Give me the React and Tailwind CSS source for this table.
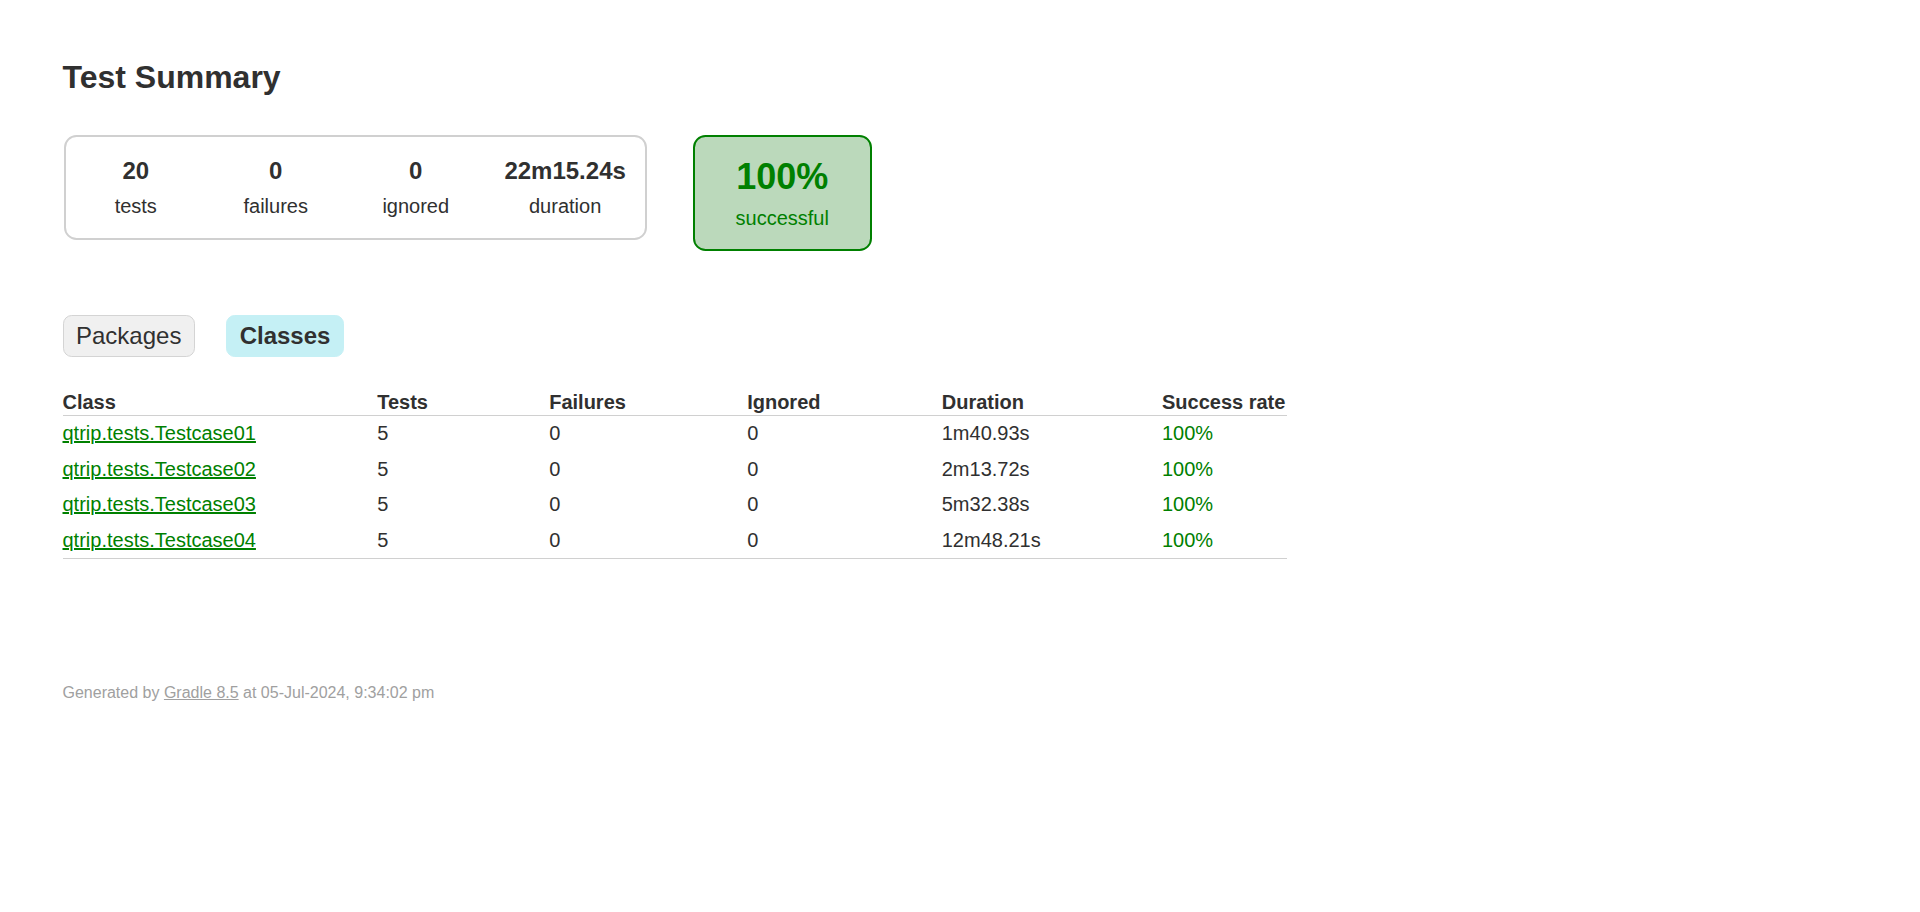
export default function App() {
  const rows = [
    ["qtrip.tests.Testcase01", "5", "0", "0", "1m40.93s", "100%"],
    ["qtrip.tests.Testcase02", "5", "0", "0", "2m13.72s", "100%"],
    ["qtrip.tests.Testcase03", "5", "0", "0", "5m32.38s", "100%"],
    ["qtrip.tests.Testcase04", "5", "0", "0", "12m48.21s", "100%"],
  ];
  const boxes = [
    ["20", "tests", "w-[137.5px]"],
    ["0", "failures", "w-[137.5px]"],
    ["0", "ignored", "w-[137.5px]"],
    ["22m15.24s", "duration", "w-[156.25px]"],
  ];
  return (
    <div className="min-h-screen bg-white text-[#303030] text-[20px] leading-[1.15] font-['Liberation_Sans',Arial,sans-serif]">
      <div className="px-[62.5px] py-[37.5px]">
        <h1 className="text-[32px] font-bold mt-[21.5px] whitespace-nowrap">Test Summary</h1>

        <div className="mt-[37.5px] flex items-start">
          <div className="p-[1.25px]">
            <div className="flex border-2 border-[#d0d0d0] rounded-[12.5px]">
              {boxes.map(([v, l, w]) => (
                <div key={l} className="p-[1.25px]">
                  <div className={`${w} pt-[19px] pb-[18.5px] text-center`}>
                    <div className="text-[24px] font-bold mb-[10.5px]">{v}</div>
                    <p>{l}</p>
                  </div>
                </div>
              ))}
            </div>
          </div>
          <div className="p-[1.25px]">
            <div className="ml-[43.75px] w-[179px] pt-[19px] pb-[18.5px] text-center border-2 border-[#008000] bg-[#bbd9bb] rounded-[12.5px] text-[#008000]">
              <div className="text-[36px] font-bold mb-[10.5px]">100%</div>
              <p>successful</p>
            </div>
          </div>
        </div>

        <ul className="mt-[50px] mb-[20px] py-[12.5px] flex">
          <li className="px-[12.5px] py-[6.25px] border border-[#d4d4d4] bg-[#f0f0f0] rounded-[8.75px] mr-[31.25px] text-[24px]">
            Packages
          </li>
          <li className="px-[12.5px] py-[6.25px] border border-[#c5f0f5] bg-[#c5f0f5] rounded-[8.75px] mr-[31.25px] text-[24px] font-bold">
            Classes
          </li>
        </ul>

        <table className="border-collapse border-b border-[#d0d0d0]">
          <thead>
            <tr>
              {["Class", "Tests", "Failures", "Ignored", "Duration", "Success rate"].map((h, i) => (
                <th
                  key={h}
                  className={`${i === 0 ? "pl-0" : "pl-[120px]"} pr-[1.25px] pt-[1.5px] pb-[1.25px] text-left font-bold whitespace-nowrap border-b border-[#d0d0d0]`}
                >
                  {h}
                </th>
              ))}
            </tr>
          </thead>
          <tbody>
            {rows.map((r) => (
              <tr key={r[0]}>
                <td className="pl-0 pr-[1.25px] py-[6.25px] whitespace-nowrap text-[#008000]">
                  <a href="#" className="underline text-[#008000]">{r[0]}</a>
                </td>
                <td className="pl-[120px] pr-[1.25px] py-[6.25px] whitespace-nowrap">{r[1]}</td>
                <td className="pl-[120px] pr-[1.25px] py-[6.25px] whitespace-nowrap">{r[2]}</td>
                <td className="pl-[120px] pr-[1.25px] py-[6.25px] whitespace-nowrap">{r[3]}</td>
                <td className="pl-[120px] pr-[1.25px] py-[6.25px] whitespace-nowrap">{r[4]}</td>
                <td className="pl-[120px] pr-[1.25px] py-[6.25px] whitespace-nowrap text-[#008000]">{r[5]}</td>
              </tr>
            ))}
          </tbody>
        </table>

        <div className="mt-[125px] text-[16px] text-[#a0a0a0] whitespace-nowrap">
          Generated by <a href="#" className="underline text-[#a0a0a0]">Gradle 8.5</a> at 05-Jul-2024, 9:34:02 pm
        </div>
      </div>
    </div>
  );
}
